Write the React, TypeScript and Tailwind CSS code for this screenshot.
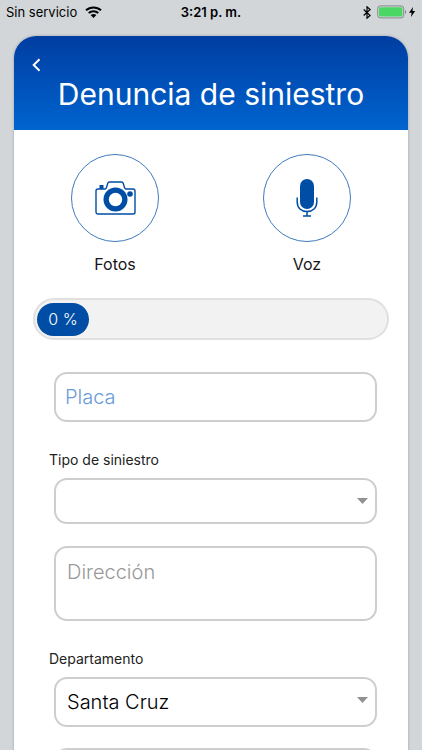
import type { ReactNode } from "react";

const fieldStyle =
  "block w-full rounded-[13px] border-2 border-[#cecece] bg-white font-light outline-none focus:border-[#004da5]";

interface MediaButtonProps {
  label: string;
  children: ReactNode;
}

function MediaButton({ label, children }: MediaButtonProps) {
  return (
    <button type="button" className="flex flex-col items-center gap-3">
      <span className="flex size-[88px] items-center justify-center rounded-full border border-[#3f79bf]">
        {children}
      </span>
      <span className="text-base leading-5 text-[#161616]">{label}</span>
    </button>
  );
}

interface SelectFieldProps {
  id: string;
  label: string;
  options: string[];
  className: string;
}

function SelectField({ id, label, options, className }: SelectFieldProps) {
  return (
    <div>
      <label
        htmlFor={id}
        className="-ml-[5px] block text-sm leading-4 text-[#222]"
      >
        {label}
      </label>
      <div className="relative mt-[10px]">
        <select
          id={id}
          className={`${fieldStyle} ${className} appearance-none pr-8 pl-[11px] text-xl text-black`}
        >
          {options.map((option) => (
            <option key={option}>{option}</option>
          ))}
        </select>
        <svg
          className="pointer-events-none absolute top-5 right-[9px] h-[6px] w-[11px]"
          viewBox="0 0 11 6"
          fill="#919191"
        >
          <path d="M0 0h11L5.5 6z" />
        </svg>
      </div>
    </div>
  );
}

function StatusBar() {
  return (
    <div className="grid h-6 shrink-0 grid-cols-3 items-center px-[6px] text-[13px] leading-4 text-black">
      <div className="flex items-center gap-2">
        <span>Sin servicio</span>
        <svg className="h-[12px] w-[17px]" viewBox="0 0 17 12" fill="none">
          <path
            d="M1 4.3C5.2.4 11.8.4 16 4.3M3.7 7.1c2.7-2.5 6.9-2.5 9.6 0"
            stroke="#000"
            strokeWidth="2"
          />
          <path d="M5.6 9c1.7-1.5 4.1-1.5 5.8 0l-2.9 3z" fill="#000" />
        </svg>
      </div>
      <div className="text-center font-semibold whitespace-nowrap">
        3:21 p. m.
      </div>
      <div className="flex items-center justify-end gap-[6px]">
        <svg className="h-[13px] w-[8px]" viewBox="0 0 8 13" fill="none">
          <path
            d="M.7 3.5l6.4 6L4 12.2V.8l3.1 2.7-6.4 6"
            stroke="#000"
            strokeWidth="1.2"
          />
        </svg>
        <svg className="h-[14px] w-[39px]" viewBox="0 0 39 14" fill="none">
          <rect
            x=".7"
            y=".9"
            width="26"
            height="12"
            rx="2.5"
            stroke="#84898a"
            strokeWidth="1"
          />
          <rect x="2" y="2.3" width="23.4" height="9.2" rx="1" fill="#4bd763" />
          <path d="M28 5c1.6.5 1.6 3.5 0 4z" fill="#84898a" />
          <path d="M36 2l-4 5.8h2.6L34 12l4.2-5.9h-2.7z" fill="#000" />
        </svg>
      </div>
    </div>
  );
}

function CameraIcon() {
  return (
    <svg className="h-[34px] w-[41px]" viewBox="0 0 41 34" fill="none">
      <path
        d="M3 8h7c1 0 1.200-.6 1.500-1.500l1.300-4.200C13.100 1.400 13.400 1 14.300 1h12.400c.9 0 1.200.4 1.500 1.300l1.300 4.200c.3.900.5 1.500 1.500 1.500h7c1.200 0 2 .8 2 2v21c0 1.200-.8 2-2 2H3c-1.200 0-2-.8-2-2V10c0-1.200.8-2 2-2z"
        stroke="#004da5"
        strokeWidth="1.4"
      />
      <path d="M4.500 4h4v4h-4z" fill="#004da5" />
      <circle cx="20.500" cy="18.500" r="12" fill="#004da5" />
      <circle cx="20.500" cy="18.500" r="6.700" fill="#fff" />
      <circle cx="35" cy="13" r="2.800" fill="#004da5" />
    </svg>
  );
}

function MicIcon() {
  return (
    <svg className="h-[38px] w-[22px]" viewBox="0 0 22 38" fill="none">
      <rect x="4" y="0" width="14" height="30" rx="7" fill="#004da5" />
      <path
        d="M1.200 18.500v4.500c0 5.800 4 9.500 9.800 9.500s9.800-3.700 9.800-9.500v-4.500M11 32.500V37M7 37h8"
        stroke="#004da5"
        strokeWidth="1.500"
      />
    </svg>
  );
}

export default function App() {
  const progress = 0;

  return (
    <div className="flex h-screen flex-col bg-[#d2d6d9] font-['Inter','Liberation_Sans',sans-serif]">
      <StatusBar />
      <main className="flex-1 overflow-y-auto px-[14px] pt-3 [scrollbar-width:none]">
        <div className="overflow-hidden rounded-t-[22px] bg-white shadow-[0_0_3px_rgba(0,0,0,0.25)]">
          <header className="flex h-[94px] flex-col bg-linear-to-b from-[#003da1] to-[#0064cf] text-white">
            <button
              type="button"
              aria-label="Volver"
              className="mt-5 ml-4 flex h-[18px] w-3 items-center justify-center"
            >
              <svg className="h-[14px] w-[9px]" viewBox="0 0 9 14" fill="none">
                <path
                  d="M7.500 1.200L1.700 7l5.800 5.800"
                  stroke="currentColor"
                  strokeWidth="2"
                />
              </svg>
            </button>
            <h1 className="text-center text-3xl leading-10 whitespace-nowrap">
              Denuncia de siniestro
            </h1>
          </header>

          <div className="grid grid-cols-2 px-[5px] pt-6">
            <MediaButton label="Fotos">
              <CameraIcon />
            </MediaButton>
            <MediaButton label="Voz">
              <MicIcon />
            </MediaButton>
          </div>

          <div
            role="progressbar"
            aria-valuenow={progress}
            aria-valuemin={0}
            aria-valuemax={100}
            aria-label="Progreso"
            className="mx-[19px] mt-6 flex h-[42px] items-center rounded-full border-2 border-[#e0e0e0] bg-[#f2f2f2] px-[2px]"
          >
            <div
              className="flex h-[33px] min-w-[52px] items-center justify-center rounded-full bg-[#004da5] text-base font-light text-white"
              style={{ width: `${progress}%` }}
            >
              {progress} %
            </div>
          </div>

          <form className="mt-8 mr-[31px] ml-10 pb-8">
            <input
              type="text"
              aria-label="Placa"
              placeholder="Placa"
              className={`${fieldStyle} h-[50px] px-[9px] text-xl placeholder:text-[#6a9bd8]`}
            />
            <div className="mt-[30px]">
              <SelectField
                id="tipo"
                label="Tipo de siniestro"
                options={[""]}
                className="h-[46px]"
              />
            </div>
            <textarea
              aria-label="Dirección"
              placeholder="Dirección"
              className={`${fieldStyle} mt-[22px] h-[75px] resize-none px-[11px] pt-[10px] text-xl leading-7 placeholder:text-[#999]`}
            />
            <div className="mt-[30px]">
              <SelectField
                id="departamento"
                label="Departamento"
                options={["Santa Cruz"]}
                className="h-[50px]"
              />
            </div>
            <textarea
              aria-label="Detalle"
              className={`${fieldStyle} mt-[21px] h-[75px] resize-none px-[11px] pt-[10px] text-xl leading-7`}
            />
          </form>
        </div>
      </main>
    </div>
  );
}
